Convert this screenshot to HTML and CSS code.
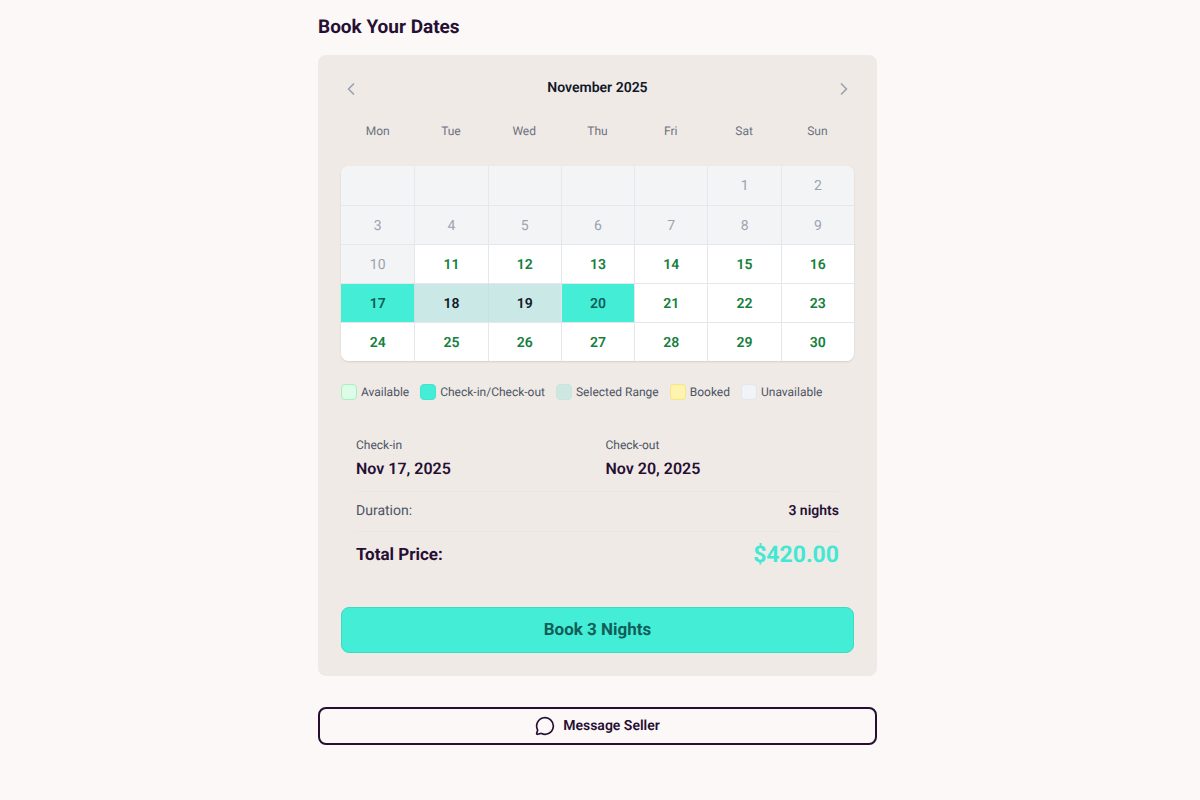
FILE: index.html
```html
<!DOCTYPE html>
<html lang="en">
<head>
    <meta charset="UTF-8">
    <meta name="viewport" content="width=device-width, initial-scale=1.0">
    <title>Book Your Dates</title>
    <link rel="stylesheet" href="styles.css">
</head>
<body>
    <main class="booking">
        <h2 class="booking-title">Book Your Dates</h2>

        <section class="card">
            <div class="month-nav">
                <button class="nav-btn" type="button" aria-label="Previous month">
                    <svg viewBox="0 0 20 20" width="20" height="20" fill="none" stroke="currentColor" stroke-width="1.7" stroke-linecap="round" stroke-linejoin="round"><path d="M12.5 5 L7.5 10 L12.5 15"/></svg>
                </button>
                <h3 class="month">November 2025</h3>
                <button class="nav-btn" type="button" aria-label="Next month">
                    <svg viewBox="0 0 20 20" width="20" height="20" fill="none" stroke="currentColor" stroke-width="1.7" stroke-linecap="round" stroke-linejoin="round"><path d="M7.5 5 L12.5 10 L7.5 15"/></svg>
                </button>
            </div>

            <table class="calendar">
                <thead>
                    <tr>
                        <th>Mon</th>
                        <th>Tue</th>
                        <th>Wed</th>
                        <th>Thu</th>
                        <th>Fri</th>
                        <th>Sat</th>
                        <th>Sun</th>
                    </tr>
                </thead>
                <tbody>
                    <tr>
                        <td></td>
                        <td></td>
                        <td></td>
                        <td></td>
                        <td></td>
                        <td><button class="day" type="button" disabled>1</button></td>
                        <td><button class="day" type="button" disabled>2</button></td>
                    </tr>
                    <tr>
                        <td><button class="day" type="button" disabled>3</button></td>
                        <td><button class="day" type="button" disabled>4</button></td>
                        <td><button class="day" type="button" disabled>5</button></td>
                        <td><button class="day" type="button" disabled>6</button></td>
                        <td><button class="day" type="button" disabled>7</button></td>
                        <td><button class="day" type="button" disabled>8</button></td>
                        <td><button class="day" type="button" disabled>9</button></td>
                    </tr>
                    <tr>
                        <td><button class="day" type="button" disabled>10</button></td>
                        <td><button class="day available" type="button">11</button></td>
                        <td><button class="day available" type="button">12</button></td>
                        <td><button class="day available" type="button">13</button></td>
                        <td><button class="day available" type="button">14</button></td>
                        <td><button class="day available" type="button">15</button></td>
                        <td><button class="day available" type="button">16</button></td>
                    </tr>
                    <tr>
                        <td><button class="day endpoint" type="button">17</button></td>
                        <td class="in-range"><button class="day range" type="button">18</button></td>
                        <td class="in-range"><button class="day range" type="button">19</button></td>
                        <td><button class="day endpoint" type="button">20</button></td>
                        <td><button class="day available" type="button">21</button></td>
                        <td><button class="day available" type="button">22</button></td>
                        <td><button class="day available" type="button">23</button></td>
                    </tr>
                    <tr>
                        <td><button class="day available" type="button">24</button></td>
                        <td><button class="day available" type="button">25</button></td>
                        <td><button class="day available" type="button">26</button></td>
                        <td><button class="day available" type="button">27</button></td>
                        <td><button class="day available" type="button">28</button></td>
                        <td><button class="day available" type="button">29</button></td>
                        <td><button class="day available" type="button">30</button></td>
                    </tr>
                </tbody>
            </table>

            <ul class="legend">
                <li><span class="swatch swatch-available"></span>Available</li>
                <li><span class="swatch swatch-endpoint"></span>Check-in/Check-out</li>
                <li><span class="swatch swatch-range"></span>Selected Range</li>
                <li><span class="swatch swatch-booked"></span>Booked</li>
                <li><span class="swatch swatch-unavailable"></span>Unavailable</li>
            </ul>

            <div class="summary">
                <div class="dates">
                    <div>
                        <div class="date-label">Check-in</div>
                        <div class="date-value">Nov 17, 2025</div>
                    </div>
                    <div>
                        <div class="date-label">Check-out</div>
                        <div class="date-value">Nov 20, 2025</div>
                    </div>
                </div>
                <div class="duration">
                    <span>Duration:</span>
                    <strong>3 nights</strong>
                </div>
                <div class="total">
                    <span>Total Price:</span>
                    <span class="price">$420.00</span>
                </div>
            </div>

            <button class="book-btn" type="button">Book 3 Nights</button>
        </section>

        <button class="message-btn" type="button">
            <svg viewBox="0 0 24 24" width="20" height="20" fill="none" stroke="currentColor" stroke-width="2" stroke-linecap="round" stroke-linejoin="round"><path d="M2.992 16.342a2 2 0 0 1 .094 1.167l-1.065 3.29a1 1 0 0 0 1.236 1.168l3.413-.998a2 2 0 0 1 1.099.092 10 10 0 1 0-4.777-4.719"/></svg>
            Message Seller
        </button>
    </main>
</body>
</html>
```
FILE: styles.css
```css
* {
    box-sizing: border-box;
}

body {
    margin: 0;
    padding: 0 5px 0 0;
    font-family: Roboto, "Liberation Sans", sans-serif;
    text-rendering: geometricPrecision;
    background-color: #fcf8f7;
    color: #260f33;
}

button {
    font-family: inherit;
    text-rendering: inherit;
    cursor: pointer;
}

.booking {
    max-width: 559px;
    margin: 0 auto;
    padding: 12px 0 32px;
}

.booking-title {
    margin: 0 0 13px;
    font-size: 19px;
    line-height: 30px;
    font-weight: 700;
}

.card {
    padding: 23px;
    border-radius: 8px;
    background-color: #f0eae7;
}

.month-nav {
    display: flex;
    justify-content: space-between;
    align-items: center;
}

.nav-btn {
    display: flex;
    padding: 0;
    border: none;
    background: none;
    color: #9ca3af;
}

.month {
    margin: 0;
    font-size: 14px;
    line-height: 21px;
    font-weight: 600;
    color: #111827;
}

/* Calendar */
.calendar {
    display: block;
    margin-top: 22px;
}

.calendar thead,
.calendar tbody {
    display: block;
}

.calendar tr {
    display: grid;
    grid-template-columns: repeat(7, 1fr);
}

.calendar th {
    padding: 0;
    font-size: 12px;
    line-height: 20px;
    font-weight: 400;
    color: #6b7280;
}

.calendar tbody {
    margin-top: 25px;
    border-radius: 8px;
    overflow: hidden;
    background-color: #fff;
    box-shadow: 0 1px 2px rgba(0, 0, 0, 0.12);
}

.calendar td {
    height: 39px;
    padding: 0;
    border-left: 1px solid #e5e7eb;
    border-top: 1px solid #e5e7eb;
    background-color: #f3f4f6;
}

.calendar td:first-child {
    border-left: none;
}

.calendar tbody tr:first-child td {
    border-top: none;
}

.calendar .in-range {
    border-left-color: #c5e2df;
}

.day {
    display: block;
    width: 100%;
    height: 100%;
    padding: 1px 0 0;
    border: none;
    background: none;
    font-size: 14px;
    font-weight: 600;
}

.day:disabled {
    font-weight: 400;
    color: #9ca3af;
    cursor: default;
}

.available {
    background-color: #fff;
    color: #15803d;
}

.endpoint {
    background-color: #44edd6;
    color: #115e59;
}

.range {
    background-color: #cae8e5;
    color: #111827;
}

/* Legend */
.legend {
    display: flex;
    flex-wrap: wrap;
    gap: 8px 11px;
    margin: 23px 0 0;
    padding: 0;
    list-style: none;
    font-size: 12px;
    line-height: 16px;
    color: #4b5563;
}

.legend li {
    display: flex;
    align-items: center;
    gap: 4px;
}

.swatch {
    width: 16px;
    height: 16px;
    border: 1px solid;
    border-radius: 4px;
}

.swatch-available {
    background-color: #dcfce7;
    border-color: #a7efc0;
}

.swatch-endpoint {
    background-color: #44edd6;
    border-color: #44e3ce;
}

.swatch-range {
    background-color: #cfe7e1;
    border-color: #c8e6df;
}

.swatch-booked {
    background-color: #fef4b0;
    border-color: #f9e67a;
}

.swatch-unavailable {
    background-color: #f1f3f6;
    border-color: #e3e6ea;
}

/* Price summary */
.summary {
    margin-top: 22px;
    padding: 15px;
}

.dates {
    display: grid;
    grid-template-columns: 1fr 1fr;
    gap: 16px;
    padding-bottom: 10px;
    border-bottom: 1px solid #ece6e3;
}

.date-label {
    font-size: 12px;
    line-height: 16px;
    color: #4b5563;
}

.date-value {
    margin-top: 4px;
    font-size: 16px;
    line-height: 24px;
    font-weight: 600;
}

.duration {
    display: flex;
    justify-content: space-between;
    padding: 9px 0 10px;
    border-bottom: 1px solid #ece6e3;
    font-size: 14px;
    line-height: 20px;
}

.duration span {
    color: #4b5563;
}

.duration strong {
    font-weight: 600;
}

.total {
    display: flex;
    justify-content: space-between;
    align-items: center;
    padding-top: 7px;
    font-size: 17px;
    line-height: 32px;
    font-weight: 700;
}

.price {
    font-size: 23px;
    color: #44e8d2;
}

/* Buttons */
.book-btn {
    display: block;
    width: 100%;
    margin-top: 21px;
    padding: 10px;
    border: 1px solid #3cd9c3;
    border-radius: 8px;
    background-color: #44edd6;
    font-size: 17px;
    line-height: 24px;
    font-weight: 700;
    color: #115e59;
}

.message-btn {
    display: flex;
    justify-content: center;
    align-items: center;
    gap: 8px;
    width: 100%;
    margin-top: 31px;
    padding: 7px;
    border: 2px solid #260f33;
    border-radius: 8px;
    background: none;
    font-size: 14px;
    line-height: 20px;
    font-weight: 600;
    color: #260f33;
}
```
